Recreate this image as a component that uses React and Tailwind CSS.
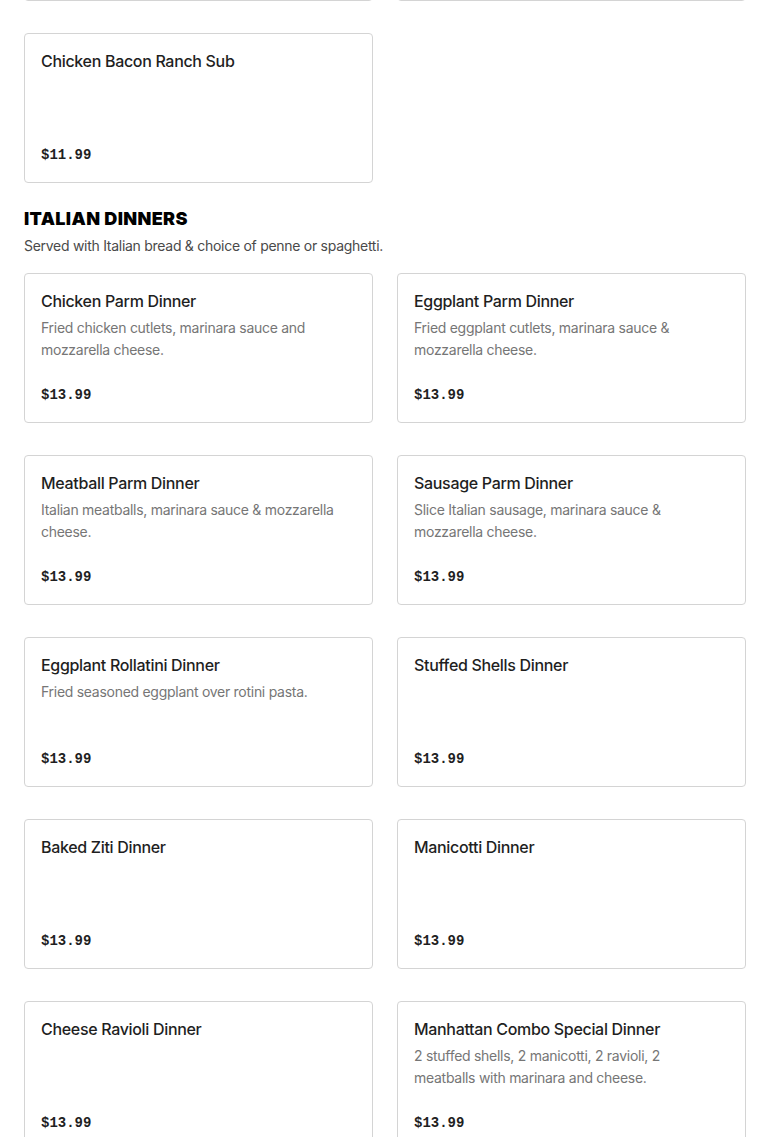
import React from "react";

const dinners = [
  { name: "Chicken Parm Dinner", desc: "Fried chicken cutlets, marinara sauce and mozzarella cheese.", price: "$13.99" },
  { name: "Eggplant Parm Dinner", desc: "Fried eggplant cutlets, marinara sauce & mozzarella cheese.", price: "$13.99" },
  { name: "Meatball Parm Dinner", desc: "Italian meatballs, marinara sauce & mozzarella cheese.", price: "$13.99" },
  { name: "Sausage Parm Dinner", desc: "Slice Italian sausage, marinara sauce & mozzarella cheese.", price: "$13.99" },
  { name: "Eggplant Rollatini Dinner", desc: "Fried seasoned eggplant over rotini pasta.", price: "$13.99" },
  { name: "Stuffed Shells Dinner", desc: "", price: "$13.99" },
  { name: "Baked Ziti Dinner", desc: "", price: "$13.99" },
  { name: "Manicotti Dinner", desc: "", price: "$13.99" },
  { name: "Cheese Ravioli Dinner", desc: "", price: "$13.99" },
  { name: "Manhattan Combo Special Dinner", desc: "2 stuffed shells, 2 manicotti, 2 ravioli, 2 meatballs with marinara and cheese.", price: "$13.99" },
];

const ItemCard = ({ item }) => (
  <div className="flex h-[150px] flex-col justify-between rounded-[4px] border border-[#d4d4d4] bg-white px-4 pt-[15px] pb-[15px]">
    <div>
      <h3 className="text-[16px] leading-6 font-medium tracking-[-0.02em] text-[#1f1f1f]">{item.name}</h3>
      {item.desc && (
        <p className="mt-1 pr-2 text-[14px] leading-[22px] tracking-[-0.02em] text-[#767676]">{item.desc}</p>
      )}
    </div>
    <p className="font-['Liberation_Mono',monospace] text-[14px] leading-6 font-bold text-[#1f1f1f]">
      {item.price}
    </p>
  </div>
);

const App = () => {
  return (
    <div className="min-h-screen bg-white px-6 font-['Inter',sans-serif]">
      {/* tail end of the subs section */}
      <div className="-mt-[149px] grid grid-cols-2 gap-x-6 gap-y-8">
        <div className="h-[150px] rounded-[4px] border border-[#d4d4d4]" />
        <div className="h-[150px] rounded-[4px] border border-[#d4d4d4]" />
        <ItemCard item={{ name: "Chicken Bacon Ranch Sub", desc: "", price: "$11.99" }} />
      </div>

      {/* italian dinners */}
      <div className="mt-[24px]">
        <h2 className="text-[18px] leading-6 font-black tracking-[0.02em] text-black uppercase">
          Italian Dinners
        </h2>
        <p className="mt-1 text-[14px] leading-[22px] tracking-[-0.02em] text-[#4a4a4a]">
          Served with Italian bread &amp; choice of penne or spaghetti.
        </p>
        <div className="mt-[16px] grid grid-cols-2 gap-x-6 gap-y-8 pb-10">
          {dinners.map((item, index) => (
            <ItemCard key={index} item={item} />
          ))}
        </div>
      </div>
    </div>
  );
};

export default App;
